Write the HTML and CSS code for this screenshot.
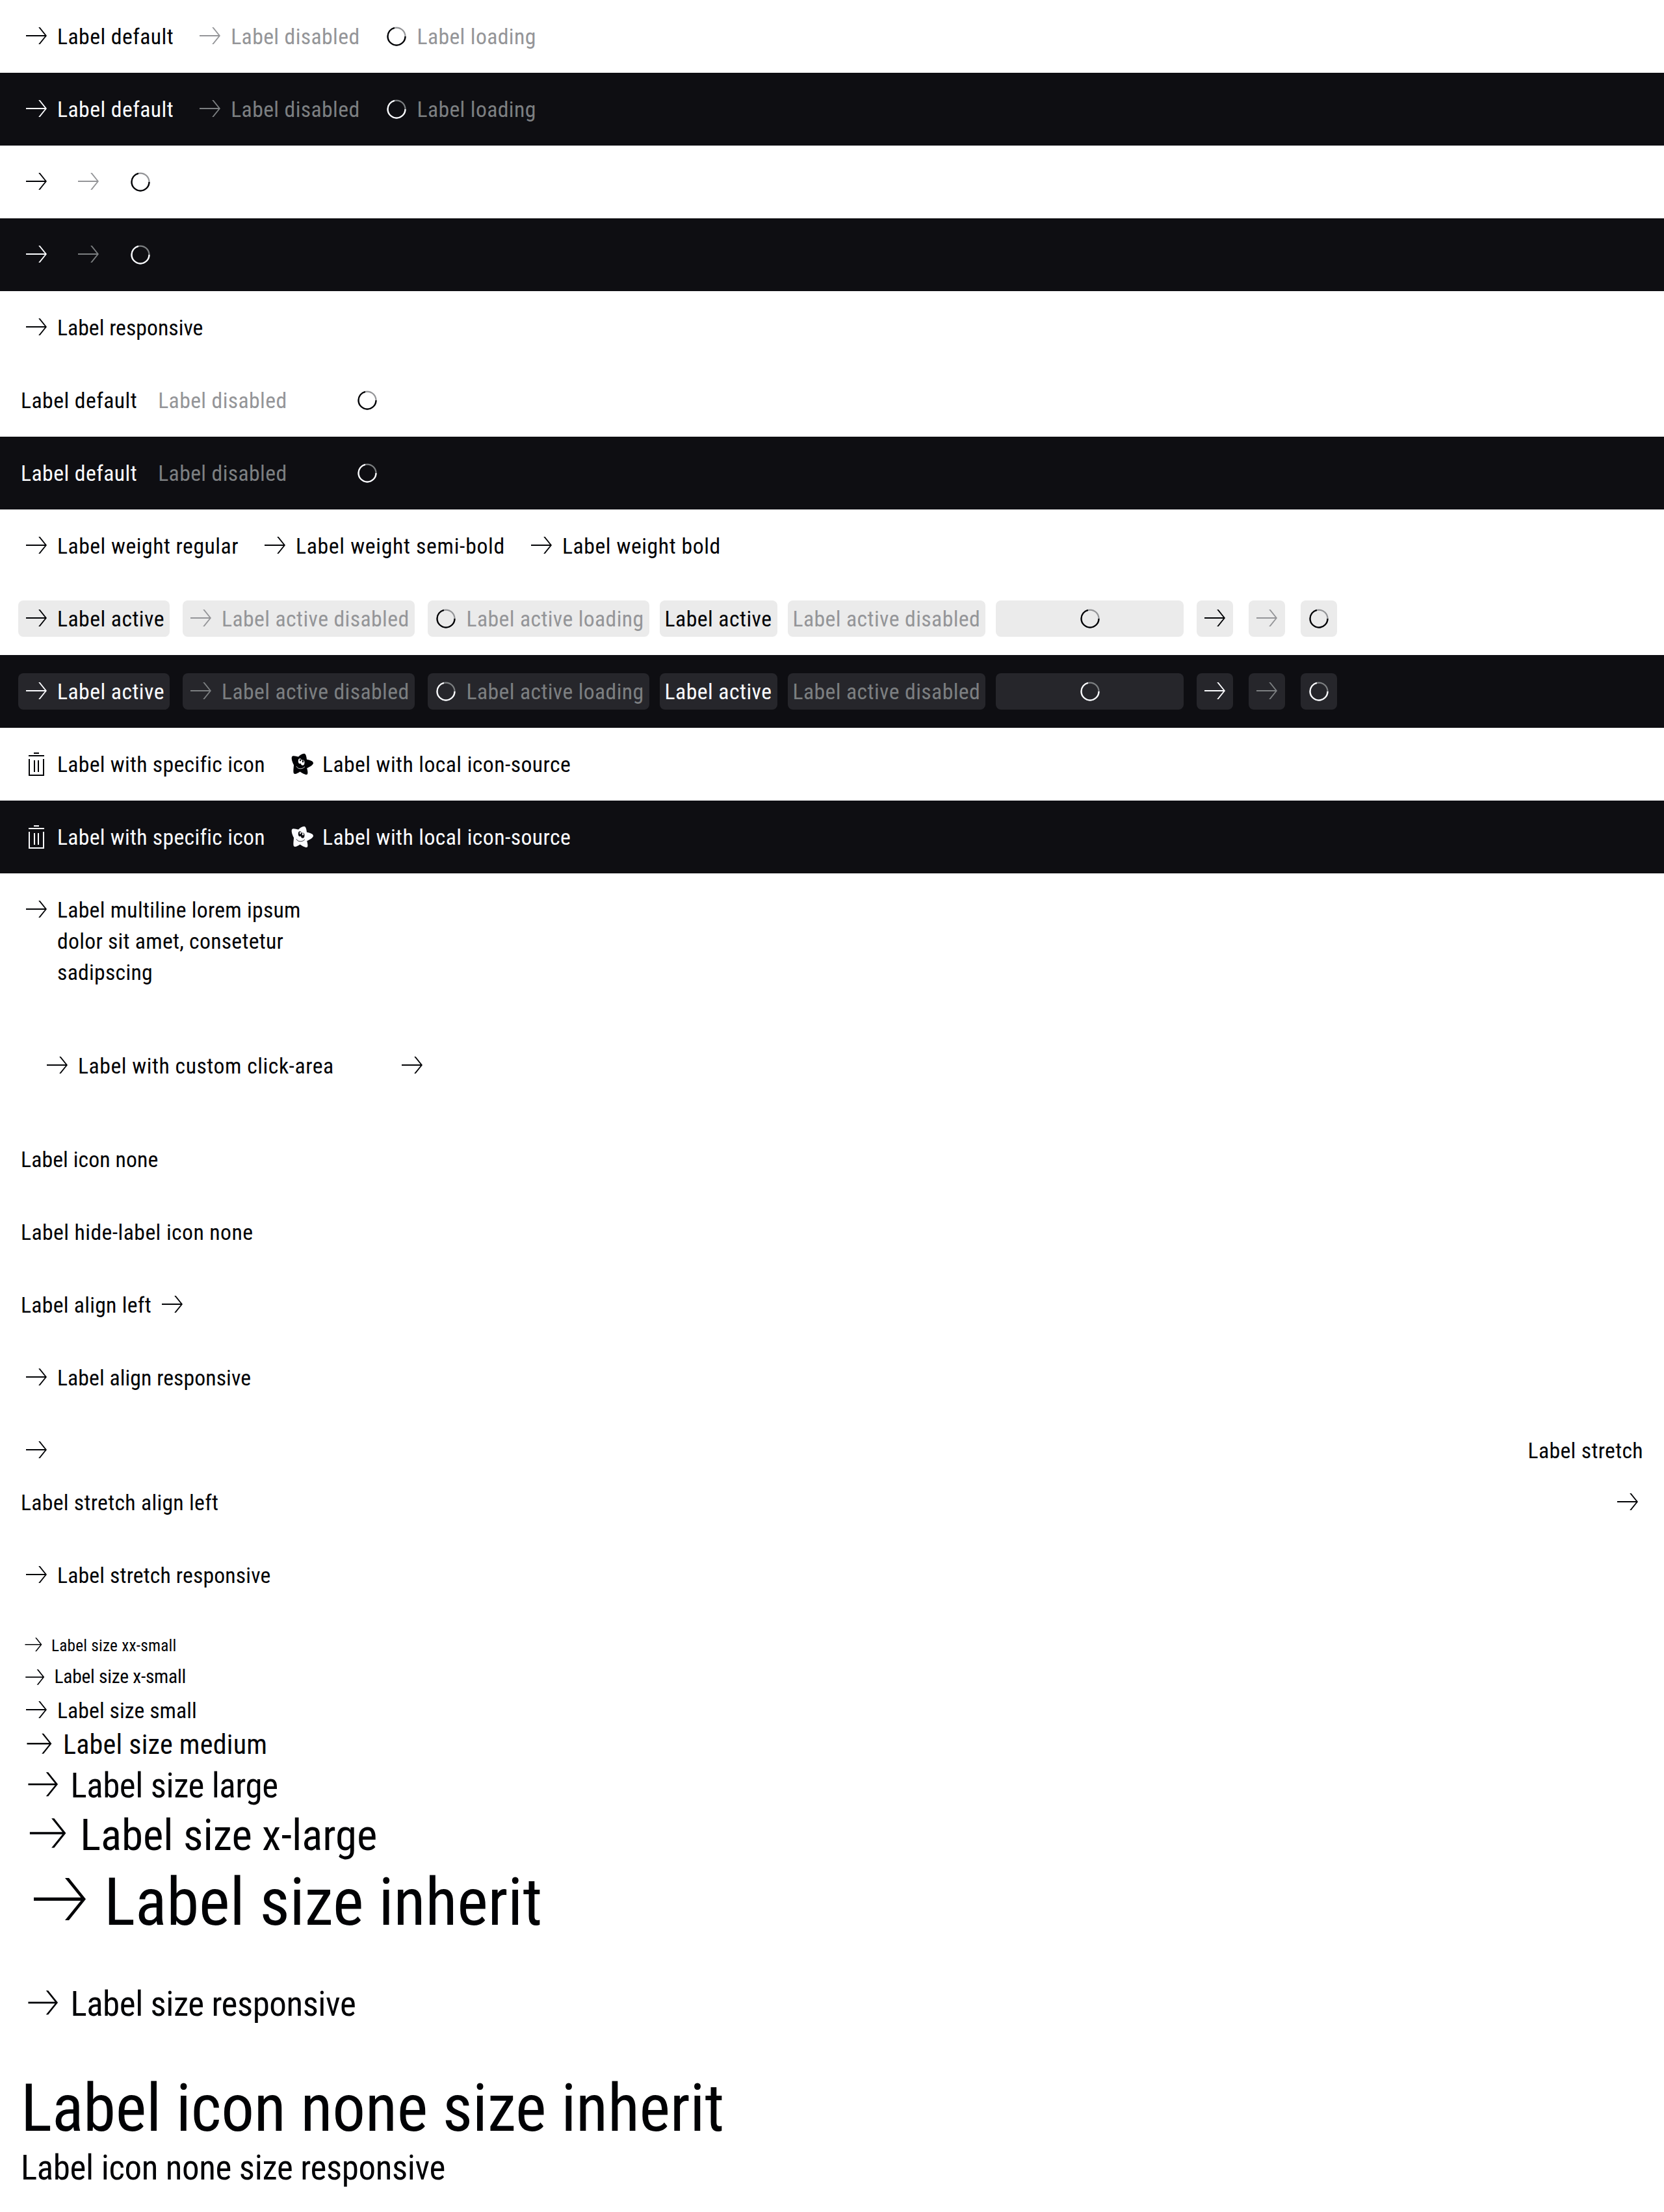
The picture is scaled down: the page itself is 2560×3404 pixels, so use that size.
FILE: index.html
```html
<!DOCTYPE html>
<html lang="en">
<head>
<meta charset="utf-8">
<title>Link Pure</title>
<link rel="stylesheet" href="styles.css">
</head>
<body>
<svg class="sprite" aria-hidden="true">
  <symbol id="arrow" viewBox="0 0 24 24"><path d="M20 11.5 14.8 5h-1.2l4.85 6H4v1h14.45l-4.85 6h1.2z" fill="currentColor"/></symbol>
  <symbol id="trash" viewBox="0 0 24 24"><path d="M10 3h4v1h-4zM6 5h12v1H6zM6 8h1v12h10V8h1v13H6zM10 9h1v9h-1zM13 9h1v9h-1z" fill="currentColor"/></symbol>
  <symbol id="star" viewBox="0 0 24 24">
    <path d="M4.6 6.1C5.4 5.1 7.6 5.8 9.6 6.3 10.8 4.9 12.7 3.6 14.2 3.9 15.5 4.3 15.7 6.5 16 8.4 18.2 8.7 21 9.7 21 11.1 20.9 12.7 18 14.2 16.1 15 16.5 16.7 17.2 19.3 16.2 19.9 14.9 20.4 12.3 18.6 10.8 17.7 9.5 18.6 7.2 20 6.2 19.3 5.2 18.4 6 14.5 6 12.5 5 10.9 3.8 7.4 4.6 6.1z" fill="currentColor"/>
    <g class="face">
      <ellipse cx="10.7" cy="9.6" rx="1.3" ry="2"/>
      <ellipse cx="12.8" cy="10.8" rx="1.45" ry="2.1"/>
      <path d="M8 13.6c.8 2.2 4.7 2.5 6.5.3" fill="none" stroke-width=".4"/>
    </g>
    <ellipse cx="11" cy="8.9" rx=".55" ry=".8" fill="currentColor"/>
    <ellipse cx="13" cy="9.9" rx=".6" ry=".85" fill="currentColor"/>
  </symbol>
  <symbol id="spinner" viewBox="-16 -16 32 32">
    <circle class="track" r="9" fill="none" stroke-width="1.5"/>
    <circle class="value" r="9" fill="none" stroke-width="1.5" stroke-dasharray="40 17"/>
  </symbol>
</svg>

<section class="row">
  <a class="link"><svg class="icon"><use href="#arrow"/></svg><span class="txt t-default">Label default</span></a>
  <a class="link disabled"><svg class="icon"><use href="#arrow"/></svg><span class="txt t-disabled">Label disabled</span></a>
  <a class="link disabled"><svg class="icon"><use href="#spinner"/></svg><span class="txt t-loading">Label loading</span></a>
</section>
<section class="row dark">
  <a class="link"><svg class="icon"><use href="#arrow"/></svg><span class="txt t-default">Label default</span></a>
  <a class="link disabled"><svg class="icon"><use href="#arrow"/></svg><span class="txt t-disabled">Label disabled</span></a>
  <a class="link disabled"><svg class="icon"><use href="#spinner"/></svg><span class="txt t-loading">Label loading</span></a>
</section>
<section class="row">
  <a class="link"><svg class="icon"><use href="#arrow"/></svg></a>
  <a class="link disabled"><svg class="icon"><use href="#arrow"/></svg></a>
  <a class="link disabled"><svg class="icon"><use href="#spinner"/></svg></a>
</section>
<section class="row dark">
  <a class="link"><svg class="icon"><use href="#arrow"/></svg></a>
  <a class="link disabled"><svg class="icon"><use href="#arrow"/></svg></a>
  <a class="link disabled"><svg class="icon"><use href="#spinner"/></svg></a>
</section>
<section class="row">
  <a class="link"><svg class="icon"><use href="#arrow"/></svg><span class="txt t-responsive">Label responsive</span></a>
</section>
<section class="row">
  <a class="link"><span class="txt t-default">Label default</span></a>
  <a class="link disabled"><span class="txt t-disabled">Label disabled</span></a>
  <a class="link disabled busy"><svg class="icon"><use href="#spinner"/></svg></a>
</section>
<section class="row dark">
  <a class="link"><span class="txt t-default">Label default</span></a>
  <a class="link disabled"><span class="txt t-disabled">Label disabled</span></a>
  <a class="link disabled busy"><svg class="icon"><use href="#spinner"/></svg></a>
</section>
<section class="row">
  <a class="link"><svg class="icon"><use href="#arrow"/></svg><span class="txt t-regular">Label weight regular</span></a>
  <a class="link"><svg class="icon"><use href="#arrow"/></svg><span class="txt t-semibold">Label weight semi-bold</span></a>
  <a class="link"><svg class="icon"><use href="#arrow"/></svg><span class="txt t-bold">Label weight bold</span></a>
</section>
<section class="row">
  <a class="link active"><svg class="icon"><use href="#arrow"/></svg><span class="txt t-active">Label active</span></a>
  <a class="link active disabled"><svg class="icon"><use href="#arrow"/></svg><span class="txt t-active-disabled">Label active disabled</span></a>
  <a class="link active disabled"><svg class="icon"><use href="#spinner"/></svg><span class="txt t-active-loading">Label active loading</span></a>
  <a class="link active plain"><span class="txt t-active">Label active</span></a>
  <a class="link active plain disabled"><span class="txt t-active-disabled">Label active disabled</span></a>
  <a class="link active plain disabled busy"><svg class="icon"><use href="#spinner"/></svg></a>
  <a class="link active solo"><svg class="icon"><use href="#arrow"/></svg></a>
  <a class="link active solo disabled"><svg class="icon"><use href="#arrow"/></svg></a>
  <a class="link active solo disabled"><svg class="icon"><use href="#spinner"/></svg></a>
</section>
<section class="row dark">
  <a class="link active"><svg class="icon"><use href="#arrow"/></svg><span class="txt t-active">Label active</span></a>
  <a class="link active disabled"><svg class="icon"><use href="#arrow"/></svg><span class="txt t-active-disabled">Label active disabled</span></a>
  <a class="link active disabled"><svg class="icon"><use href="#spinner"/></svg><span class="txt t-active-loading">Label active loading</span></a>
  <a class="link active plain"><span class="txt t-active">Label active</span></a>
  <a class="link active plain disabled"><span class="txt t-active-disabled">Label active disabled</span></a>
  <a class="link active plain disabled busy"><svg class="icon"><use href="#spinner"/></svg></a>
  <a class="link active solo"><svg class="icon"><use href="#arrow"/></svg></a>
  <a class="link active solo disabled"><svg class="icon"><use href="#arrow"/></svg></a>
  <a class="link active solo disabled"><svg class="icon"><use href="#spinner"/></svg></a>
</section>
<section class="row">
  <a class="link"><svg class="icon"><use href="#trash"/></svg><span class="txt t-specific">Label with specific icon</span></a>
  <a class="link"><svg class="icon"><use href="#star"/></svg><span class="txt t-source">Label with local icon-source</span></a>
</section>
<section class="row dark">
  <a class="link"><svg class="icon"><use href="#trash"/></svg><span class="txt t-specific">Label with specific icon</span></a>
  <a class="link"><svg class="icon"><use href="#star"/></svg><span class="txt t-source">Label with local icon-source</span></a>
</section>
<section class="row">
  <a class="link"><svg class="icon"><use href="#arrow"/></svg><span class="txt t-multiline">Label multiline lorem ipsum<br>dolor sit amet, consetetur<br>sadipscing</span></a>
</section>
<section class="row">
  <a class="link roomy"><svg class="icon"><use href="#arrow"/></svg><span class="txt t-click">Label with custom click-area</span></a>
  <a class="link roomy"><svg class="icon"><use href="#arrow"/></svg></a>
</section>
<section class="row"><a class="link"><span class="txt t-none">Label icon none</span></a></section>
<section class="row"><a class="link"><span class="txt t-hide">Label hide-label icon none</span></a></section>
<section class="row"><a class="link"><span class="txt t-left">Label align left</span><svg class="icon"><use href="#arrow"/></svg></a></section>
<section class="row"><a class="link"><svg class="icon"><use href="#arrow"/></svg><span class="txt t-align-resp">Label align responsive</span></a></section>
<section class="row column spaced">
  <a class="link stretch"><svg class="icon"><use href="#arrow"/></svg><span class="txt t-stretch">Label stretch</span></a>
  <a class="link stretch"><span class="txt t-stretch-left">Label stretch align left</span><svg class="icon"><use href="#arrow"/></svg></a>
</section>
<section class="row"><a class="link"><svg class="icon"><use href="#arrow"/></svg><span class="txt t-stretch-resp">Label stretch responsive</span></a></section>
<section class="row column">
  <a class="link xx-small"><svg class="icon"><use href="#arrow"/></svg><span class="txt t-xxs">Label size xx-small</span></a>
  <a class="link x-small"><svg class="icon"><use href="#arrow"/></svg><span class="txt t-xs">Label size x-small</span></a>
  <a class="link"><svg class="icon"><use href="#arrow"/></svg><span class="txt t-s">Label size small</span></a>
  <a class="link medium"><svg class="icon"><use href="#arrow"/></svg><span class="txt t-m">Label size medium</span></a>
  <a class="link large"><svg class="icon"><use href="#arrow"/></svg><span class="txt t-l">Label size large</span></a>
  <a class="link x-large"><svg class="icon"><use href="#arrow"/></svg><span class="txt t-xl">Label size x-large</span></a>
  <a class="link inherit"><svg class="icon"><use href="#arrow"/></svg><span class="txt t-inherit">Label size inherit</span></a>
</section>
<section class="row"><a class="link large"><svg class="icon"><use href="#arrow"/></svg><span class="txt t-size-resp">Label size responsive</span></a></section>
<section class="row column">
  <a class="link inherit"><span class="txt t-none-inherit">Label icon none size inherit</span></a>
  <a class="link large"><span class="txt t-none-resp">Label icon none size responsive</span></a>
</section>
</body>
</html>
```
FILE: styles.css
```css
body {
  --text: #010205;
  --muted: #949598;
  --pill: #ebebeb;
  --page: #fff;
  margin: 0;
  background: #fff;
  font-family: "Roboto Condensed", Roboto, sans-serif;
  font-stretch: 75%;
  font-weight: 400;
  font-variant-ligatures: none;
}
.sprite { display: none; }

.row {
  display: flex;
  align-items: flex-start;
  gap: 32px;
  padding: 32px;
  background: var(--page);
  color: var(--text);
}
.row.dark {
  --text: #fbfcff;
  --muted: #7c7f81;
  --pill: #26262b;
  --page: #0e0e12;
}
.column { flex-direction: column; gap: 0; }
.row.spaced { gap: 32px; }

.link {
  display: flex;
  align-items: flex-start;
  gap: 8px;
  font-size: 32px;
  line-height: calc(12px + 1.125em);
  white-space: nowrap;
}
.link.disabled { color: var(--muted); }
.icon {
  flex: none;
  width: calc(12px + 1.125em);
  height: calc(12px + 1.125em);
}
.txt {
  font-size: 1.055em;
  padding-top: .022em;
  margin-bottom: -.022em;
}
.face { fill: var(--page); stroke: var(--page); stroke-width: 0; }
.track { stroke: var(--muted); }
.value { stroke: var(--text); }

.active {
  margin: -4px -8px -4px -4px;
  padding: 4px 8px 4px 4px;
  border-radius: 8px;
  background: var(--pill);
}
.active.plain { margin-left: -8px; padding-left: 8px; }
.active.solo { margin-right: -4px; padding-right: 4px; }
.busy { justify-content: center; width: 183.2px; }
.active.busy { width: 273px; }
.roomy { padding: 32px; }
.stretch { align-self: stretch; justify-content: space-between; }

.xx-small { font-size: 24px; min-height: 48px; }
.x-small { font-size: 28px; min-height: 48px; }
.x-small .txt { margin-top: -2px; }
.medium { font-size: 39.94px; }
.large { font-size: 50.2px; }
.x-large { font-size: 63.4px; }
.inherit { font-size: 96px; }
.inherit .txt { padding-top: .034em; margin-bottom: -.034em; }

/* label tracking */
.t-default { letter-spacing: .0126em; }
.t-disabled { letter-spacing: .0109em; }
.t-loading { letter-spacing: .0106em; }
.t-responsive { letter-spacing: -.0001em; }
.t-regular { letter-spacing: .0143em; }
.t-semibold { letter-spacing: .0199em; }
.t-bold { letter-spacing: .0166em; }
.t-active { letter-spacing: .013em; }
.t-active-disabled { letter-spacing: .0115em; }
.t-active-loading { letter-spacing: .0106em; }
.t-specific { letter-spacing: .008em; }
.t-source { letter-spacing: .012em; }
.t-multiline { letter-spacing: .0075em; }
.t-click { letter-spacing: .0152em; }
.t-none { letter-spacing: .0028em; }
.t-hide { letter-spacing: .012em; }
.t-left { letter-spacing: .0077em; }
.t-align-resp { letter-spacing: .0016em; }
.t-stretch { letter-spacing: .0096em; }
.t-stretch-left { letter-spacing: .0084em; }
.t-stretch-resp { letter-spacing: .004em; }
.t-xxs { letter-spacing: .0074em; }
.t-xs { letter-spacing: -.0094em; }
.t-s { letter-spacing: .0019em; }
.t-m { letter-spacing: .005em; }
.t-l { letter-spacing: -.0081em; }
.t-xl { letter-spacing: -.0006em; }
.t-inherit { letter-spacing: -.0017em; }
.t-size-resp { letter-spacing: -.0085em; }
.t-none-inherit { letter-spacing: -.0028em; }
.t-none-resp { letter-spacing: -.0068em; }
```
